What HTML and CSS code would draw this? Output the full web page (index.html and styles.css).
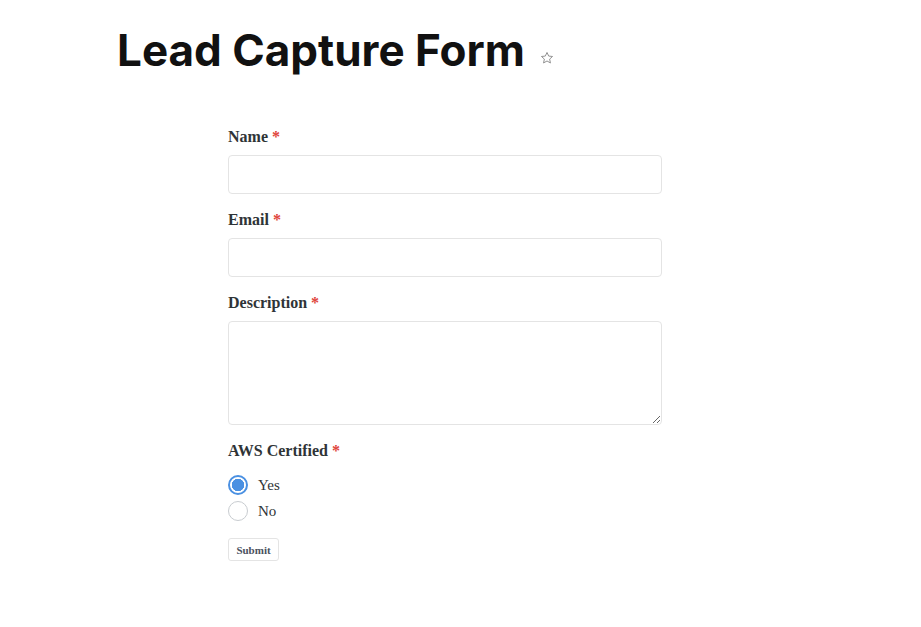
FILE: index.html
```html
<!DOCTYPE html>
<html lang="en">
<head>
<meta charset="utf-8">
<title>Lead Capture Form</title>
<link rel="stylesheet" href="styles.css">
</head>
<body>
<header class="page-header">
  <h1 class="title">Lead Capture Form</h1>
  <svg class="star" viewBox="0 0 24 24" width="14" height="14" aria-hidden="true">
    <path d="M12 2.5l2.9 6.2 6.6.7-5 4.5 1.4 6.6L12 17.1l-5.9 3.4 1.4-6.6-5-4.5 6.6-.7z" fill="none" stroke="#8a8a8a" stroke-width="1.6" stroke-linejoin="round"/>
  </svg>
</header>
<main class="form-wrap">
  <form class="form">
    <div class="field">
      <label class="label">Name <span class="req">*</span></label>
      <input class="input" type="text">
    </div>
    <div class="field">
      <label class="label">Email <span class="req">*</span></label>
      <input class="input" type="email">
    </div>
    <div class="field">
      <label class="label">Description <span class="req">*</span></label>
      <textarea class="textarea"></textarea>
    </div>
    <div class="field">
      <span class="label">AWS Certified <span class="req">*</span></span>
      <div class="options">
        <label class="option"><span class="radio checked"></span>Yes</label>
        <label class="option"><span class="radio"></span>No</label>
      </div>
    </div>
    <button type="button" class="submit">Submit</button>
  </form>
</main>
</body>
</html>
```
FILE: styles.css
```css
html, body {
  margin: 0;
  padding: 0;
  background: #ffffff;
}
body {
  font-family: "Liberation Serif", "DejaVu Serif", serif;
  color: #2f3437;
}
.page-header {
  display: flex;
  align-items: center;
  padding: 24px 0 0 117px;
  height: 53px;
}
.title {
  margin: 0;
  font-family: "Inter", "Lato", sans-serif;
  font-weight: 700;
  font-size: 44px;
  line-height: 53px;
  color: #111111;
  letter-spacing: 0;
}
.star {
  margin: 15px 0 0 15px;
}
.form-wrap {
  padding: 51px 0 0 228px;
}
.form {
  width: 434px;
  display: flex;
  flex-direction: column;
}
.field {
  display: flex;
  flex-direction: column;
  margin-bottom: 17px;
}
.label {
  font-size: 16px;
  font-weight: bold;
  line-height: 18px;
  color: #2f3437;
  margin-bottom: 9px;
}
.req {
  color: #e0443a;
}
.input, .textarea {
  box-sizing: border-box;
  width: 434px;
  border: 1px solid #e4e4e4;
  border-radius: 4px;
  background: #fff;
  margin: 0;
  font: inherit;
}
.input {
  height: 39px;
}
.textarea {
  height: 104px;
  resize: vertical;
  display: block;
}
.options {
  display: flex;
  flex-direction: column;
  gap: 6px;
  margin-top: 6px;
}
.option {
  display: flex;
  align-items: center;
  font-size: 15px;
  color: #2f3437;
  line-height: 20px;
}
.radio {
  box-sizing: border-box;
  width: 20px;
  height: 20px;
  border-radius: 50%;
  border: 1px solid #c8ccd0;
  margin-right: 10px;
  background: #fff;
}
.radio.checked {
  border: 2px solid #4a90e2;
  background: radial-gradient(circle, #4a90e2 0 6px, #fff 6.5px);
}
.submit {
  align-self: flex-start;
  margin-top: 0;
  height: 23px;
  width: 51px;
  padding: 0;
  font-family: "Liberation Serif", serif;
  font-weight: bold;
  font-size: 11px;
  color: #4a5160;
  background: #fff;
  border: 1px solid #e4e4e4;
  border-radius: 3px;
}
```
